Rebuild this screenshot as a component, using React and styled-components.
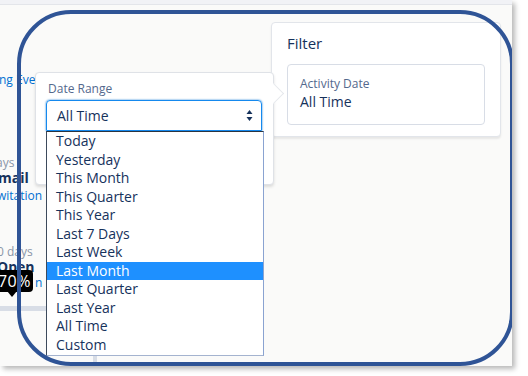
import React from "react";
import styled, { createGlobalStyle } from "styled-components";

const Global = createGlobalStyle`
  html, body { margin: 0; padding: 0; background: #ffffff; }
  body { font-family: "Open Sans", "Noto Sans", sans-serif; width: 528px; height: 376px; overflow: hidden; }
`;

const Frame = styled.div`
  position: relative;
  width: 512px;
  height: 366px;
  background: #fafaf9;
  box-shadow: 3px 3px 5px rgba(0, 0, 0, 0.28);
  overflow: hidden;
  display: flex;
  flex-direction: column;
`;

const TopStrip = styled.div`
  height: 4px;
  background: #f1f2f6;
  border-bottom: 1px solid #e3e5ea;
  flex: none;
`;

const Body = styled.div`
  flex: 1;
  display: flex;
  justify-content: space-between;
  min-height: 0;
`;

const LeftColumn = styled.div`
  width: 60px;
  display: flex;
  flex-direction: column;
  overflow: hidden;
  padding-top: 66px;
`;

const Fragment = styled.div`
  white-space: nowrap;
  font-size: ${(p) => (p.$bold ? "14px" : "12px")};
  font-weight: ${(p) => (p.$bold ? 700 : 400)};
  line-height: ${(p) => p.$lh || "18px"};
  color: ${(p) =>
    p.$tone === "link" ? "#0070d2" : p.$tone === "muted" ? "#8a96a8" : "#16325c"};
  margin-left: ${(p) => p.$shift || "0px"};
  margin-top: ${(p) => p.$gap || "0px"};
`;

const AxisBar = styled.div`
  height: 5px;
  width: 60px;
  background: #d8dde6;
  margin-top: ${(p) => p.$gap || "0px"};
`;

const FilterPanel = styled.section`
  width: 230px;
  height: 115px;
  margin: 17px 11px 0 0;
  background: #ffffff;
  border: 1px solid #e2e5ea;
  border-radius: 4px;
  box-shadow: 0 2px 2px rgba(0, 0, 0, 0.08);
  padding: 10px 15px 0 15px;
  box-sizing: border-box;
`;

const PanelTitle = styled.h2`
  margin: 0;
  font-size: 15px;
  font-weight: 400;
  line-height: 20px;
  color: #16325c;
`;

const FieldCard = styled.div`
  margin-top: 11px;
  height: 61px;
  border: 1px solid #d8dde6;
  border-radius: 4px;
  padding: 11px 12px 0 12px;
  box-sizing: border-box;
`;

const SmallLabel = styled.div`
  font-size: 12px;
  line-height: 16px;
  color: #54698d;
`;

const Value = styled.div`
  font-size: 14px;
  line-height: 20px;
  color: #16325c;
`;

const Popover = styled.div`
  position: absolute;
  left: 35px;
  top: 72px;
  width: 239px;
  height: 113px;
  background: #ffffff;
  border: 1px solid #dfe2e7;
  border-radius: 4px;
  box-shadow: 0 2px 3px rgba(0, 0, 0, 0.12);
  box-sizing: border-box;
  padding: 8px 11px 0 10px;
  &::after {
    content: "";
    position: absolute;
    right: -8px;
    top: 13px;
    width: 14px;
    height: 14px;
    background: #ffffff;
    border-top: 1px solid #e6e8ec;
    border-right: 1px solid #e6e8ec;
    transform: rotate(45deg);
  }
`;

const FieldLabel = styled.div`
  font-size: 12px;
  line-height: 16px;
  color: #54698d;
  padding-left: 2px;
`;

const SelectBox = styled.div`
  position: relative;
  margin-top: 3px;
  height: 31px;
  border: 1px solid #1589ee;
  border-radius: 4px 4px 0 0;
  box-shadow: 0 0 2px #0070d2;
  box-sizing: border-box;
  display: flex;
  align-items: center;
  justify-content: space-between;
  padding: 0 8px 0 10px;
  font-size: 14px;
  color: #16325c;
`;

const Arrows = styled.svg`
  width: 7px;
  height: 13px;
`;

const OptionList = styled.ul`
  position: absolute;
  left: -1px;
  top: 30px;
  width: 218px;
  margin: 0;
  padding: 0 0 1px 0;
  list-style: none;
  background: #ffffff;
  border: 1px solid #8aa3d1;
  border-top-color: #2a3440;
  border-left-color: #3d4a5c;
  border-bottom-color: #a4b3cf;
  box-sizing: border-box;
  z-index: 3;
`;

const Option = styled.li`
  height: 18.5px;
  line-height: 18.5px;
  padding-left: 9px;
  font-size: 14px;
  color: ${(p) => (p.$active ? "#ffffff" : "#16325c")};
  background: ${(p) => (p.$active ? "#1e90ff" : "transparent")};
  white-space: nowrap;
`;

const Tooltip = styled.div`
  position: absolute;
  left: -10px;
  top: 270px;
  width: 43px;
  height: 22px;
  background: #000000;
  border-radius: 4px;
  color: #ffffff;
  font-size: 16px;
  line-height: 22px;
  text-align: right;
  padding-right: 2px;
  box-sizing: border-box;
  letter-spacing: 0.5px;
  &::after {
    content: "";
    position: absolute;
    left: 17px;
    bottom: -5px;
    border-left: 5px solid transparent;
    border-right: 5px solid transparent;
    border-top: 6px solid #000000;
  }
`;

const VerticalAxis = styled.div`
  position: absolute;
  left: 93px;
  top: 340px;
  width: 4px;
  height: 30px;
  background: #d8dde6;
`;

const Annotation = styled.div`
  position: absolute;
  left: 17px;
  top: 10px;
  width: 497px;
  height: 356px;
  border: 4px solid #2f5496;
  border-radius: 54px;
  box-sizing: border-box;
  pointer-events: none;
  z-index: 10;
`;

const options = [
  "Today",
  "Yesterday",
  "This Month",
  "This Quarter",
  "This Year",
  "Last 7 Days",
  "Last Week",
  "Last Month",
  "Last Quarter",
  "Last Year",
  "All Time",
  "Custom",
];

export default function App() {
  return (
    <>
      <Global />
      <Frame>
        <TopStrip />
        <Body>
          <LeftColumn>
            <Fragment $tone="link" $shift="-1px">ng Eve</Fragment>
            <Fragment $tone="muted" $gap="66px" $shift="-4px" $lh="15px">ays</Fragment>
            <Fragment $bold $shift="-2px" $lh="16px">mail</Fragment>
            <Fragment $tone="link" $shift="-3px" $lh="19px">witation</Fragment>
            <Fragment $tone="muted" $gap="39px" $shift="-3px" $lh="16px">0 days</Fragment>
            <Fragment $bold $shift="-3px" $lh="13px">Open</Fragment>
            <Fragment $tone="link" $shift="35px" $gap="1px">n</Fragment>
            <AxisBar $gap="14px" />
          </LeftColumn>
          <FilterPanel>
            <PanelTitle>Filter</PanelTitle>
            <FieldCard>
              <SmallLabel>Activity Date</SmallLabel>
              <Value>All Time</Value>
            </FieldCard>
          </FilterPanel>
        </Body>
        <VerticalAxis />
        <Tooltip>70%</Tooltip>
        <Popover>
          <FieldLabel>Date Range</FieldLabel>
          <SelectBox>
            <span>All Time</span>
            <Arrows viewBox="0 0 7 13">
              <path d="M3.5 1 L6.5 5 L0.5 5 Z" fill="#16325c" />
              <path d="M3.5 12 L6.5 8 L0.5 8 Z" fill="#16325c" />
            </Arrows>
            <OptionList>
              {options.map((o) => (
                <Option key={o} $active={o === "Last Month"}>
                  {o}
                </Option>
              ))}
            </OptionList>
          </SelectBox>
        </Popover>
        <Annotation />
      </Frame>
    </>
  );
}
